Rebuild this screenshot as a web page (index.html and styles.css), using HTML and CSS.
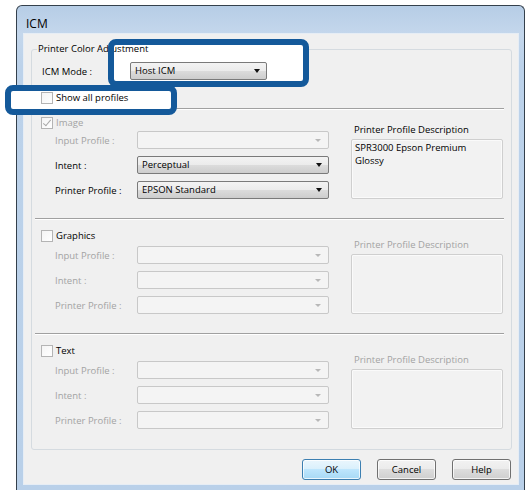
FILE: index.html
```html
<!DOCTYPE html>
<html lang="en">
<head>
  <meta charset="UTF-8">
  <meta name="viewport" content="width=device-width, initial-scale=1.0">
  <title>ICM</title>
  <link rel="stylesheet" href="styles.css">
</head>
<body>
  <div class="window">
    <div class="titlebar">ICM</div>
    <div class="client">
      <fieldset class="group">
        <legend class="raised">Printer Color Adjustment</legend>

        <div class="mode-row raised">
          <span class="mode-label">ICM Mode :</span>
          <span class="combo mode-combo">Host ICM</span>
        </div>

        <label class="check-row show-row raised">
          <span class="check"></span>Show all profiles
        </label>

        <div class="separator"></div>

        <div class="section section-first">
          <div class="section-left">
            <label class="check-row off"><span class="check checked"></span>Image</label>
            <div class="field off"><span class="field-label">Input Profile :</span><span class="combo disabled"></span></div>
            <div class="field"><span class="field-label">Intent :</span><span class="combo">Perceptual</span></div>
            <div class="field"><span class="field-label">Printer Profile :</span><span class="combo">EPSON Standard</span></div>
          </div>
          <div class="section-right">
            <div class="desc-label">Printer Profile Description</div>
            <div class="desc-box">SPR3000 Epson Premium<br>Glossy</div>
          </div>
        </div>

        <div class="separator"></div>

        <div class="section">
          <div class="section-left">
            <label class="check-row"><span class="check"></span>Graphics</label>
            <div class="field off"><span class="field-label">Input Profile :</span><span class="combo disabled"></span></div>
            <div class="field off"><span class="field-label">Intent :</span><span class="combo disabled"></span></div>
            <div class="field off"><span class="field-label">Printer Profile :</span><span class="combo disabled"></span></div>
          </div>
          <div class="section-right off">
            <div class="desc-label">Printer Profile Description</div>
            <div class="desc-box"></div>
          </div>
        </div>

        <div class="separator"></div>

        <div class="section section-last">
          <div class="section-left">
            <label class="check-row"><span class="check"></span>Text</label>
            <div class="field off"><span class="field-label">Input Profile :</span><span class="combo disabled"></span></div>
            <div class="field off"><span class="field-label">Intent :</span><span class="combo disabled"></span></div>
            <div class="field off"><span class="field-label">Printer Profile :</span><span class="combo disabled"></span></div>
          </div>
          <div class="section-right off">
            <div class="desc-label">Printer Profile Description</div>
            <div class="desc-box"></div>
          </div>
        </div>
      </fieldset>

      <div class="buttons">
        <button class="btn btn-default">OK</button>
        <button class="btn">Cancel</button>
        <button class="btn">Help</button>
      </div>
    </div>
  </div>

  <!-- highlight frames drawn over the dialog -->
  <div class="callout callout-mode"></div>
  <div class="callout callout-profiles"></div>
</body>
</html>
```

FILE: styles.css
```css
body {
  margin: 0;
  width: 529px;
  height: 492px;
  position: relative;
  overflow: hidden;
  background: #fff;
  font-family: "Open Sans", "Noto Sans", sans-serif;
  font-size: 9.5px;
  color: #000;
}

.window {
  margin: 5px 0 0 16px;
  width: 509px;
  height: 485px;
  box-sizing: border-box;
  border: 1px solid #34404c;
  border-bottom: 0;
  border-radius: 6px 6px 0 0;
  background: linear-gradient(#b6cde6, #c4d7ec 28px, #bcd2ea 60px, #b9d0e9);
  display: flex;
  flex-direction: column;
}

.titlebar {
  height: 27px;
  box-sizing: border-box;
  padding: 11px 0 0 9px;
  font-size: 12px;
  line-height: 14px;
}

.client {
  flex: 1;
  margin: 0 5px 5px 6px;
  background: #f0f0f0;
  border: 1px solid #e6edf5;
}

/* group box */
.group {
  margin: 9px 0 0 7px;
  padding: 0;
  width: 481px;
  box-sizing: border-box;
  min-inline-size: 0;
  border: 1px solid #d5dbe0;
  border-radius: 3px;
}

.group legend {
  margin-left: 5px;
  padding: 0 1px;
  line-height: 12px;
}

.raised {
  position: relative;
  z-index: 2;
}

.mode-row {
  display: flex;
  align-items: center;
  margin: 7px 0 0 10px;
  height: 18px;
}

.mode-label {
  width: 88px;
}

.mode-combo {
  width: 137px;
}

.check-row {
  display: flex;
  align-items: center;
  height: 12px;
  line-height: 12px;
}

.show-row {
  margin: 12px 0 4px 9px;
}

.check {
  width: 12px;
  height: 12px;
  box-sizing: border-box;
  margin-right: 3px;
  border: 1px solid #b4b4b4;
  background: linear-gradient(135deg, #f4f4f4, #fff);
  position: relative;
}

.checked::after {
  content: "";
  position: absolute;
  left: 3px;
  top: 0;
  width: 3px;
  height: 7px;
  border: solid #a8a8a8;
  border-width: 0 1.5px 1.5px 0;
  transform: rotate(40deg);
}

.separator {
  margin: 0 7px 0 3px;
  border-top: 1px solid #a0a0a0;
  border-bottom: 1px solid #fff;
}

.section {
  display: flex;
  padding: 10px 0 19px 9px;
}

.section-first {
  padding-top: 7px;
}

.section-last {
  padding-bottom: 20px;
}

.section-left {
  display: flex;
  flex-direction: column;
  gap: 7px;
  width: 288px;
}

.section-left .check-row {
  margin-bottom: -3px;
}

.section-first .check-row {
  margin-bottom: -5px;
}

.field {
  display: flex;
  align-items: center;
  padding-left: 14px;
  height: 18px;
}

.field-label {
  width: 82px;
}

.field .combo {
  width: 192px;
}

.off,
.off .desc-label {
  color: #a3a3a3;
}

.combo {
  height: 18px;
  box-sizing: border-box;
  padding-left: 4px;
  line-height: 16px;
  border: 1px solid #7a7a7a;
  border-radius: 2px;
  background: linear-gradient(#f3f3f3, #ebebeb 50%, #dcdcdc 50%, #cdcdcd);
  position: relative;
}

.combo::after {
  content: "";
  position: absolute;
  right: 6px;
  top: 6px;
  border-style: solid;
  border-width: 4px 3.5px 0;
  border-color: #111 transparent transparent;
}

.combo.disabled {
  border-color: #c8c8c8;
  background: #f4f4f4;
}

.combo.disabled::after {
  right: 7px;
  top: 7px;
  border-width: 3px 3px 0;
  border-color: #b8b8b8 transparent transparent;
}

.section-right {
  width: 152px;
  margin-left: 22px;
  display: flex;
  flex-direction: column;
  justify-content: flex-end;
}

.desc-label {
  line-height: 12px;
  padding-left: 3px;
  margin-bottom: 3px;
}

.desc-box {
  height: 60px;
  box-sizing: border-box;
  padding: 2px 3px;
  line-height: 12.5px;
  border: 1px solid #cfcfcf;
  border-radius: 2px;
  background: #f2f2f2;
  box-shadow: inset 0 0 0 1px #fafafa;
}

/* dialog buttons */
.buttons {
  display: flex;
  justify-content: flex-end;
  gap: 16px;
  margin: 9px 7px 0 0;
}

.btn {
  width: 59px;
  height: 21px;
  padding: 0;
  font: inherit;
  color: #000;
  border: 1px solid #707070;
  border-radius: 3px;
  background: linear-gradient(#f2f2f2, #ebebeb 50%, #dddddd 50%, #cfcfcf);
  box-shadow: inset 0 0 0 1px rgba(255, 255, 255, 0.75);
}

.btn-default {
  border-color: #3c7fb1;
  background: linear-gradient(#eaf6fd, #d9f0fc 50%, #bee6fd 50%, #a7d9f5);
}

/* highlight frames */
.callout {
  position: absolute;
}

.callout::before {
  content: "";
  position: absolute;
  inset: 3px;
  background: #fff;
  z-index: 1;
}

.callout::after {
  content: "";
  position: absolute;
  inset: 0;
  border: 6px solid #14599a;
  border-radius: 8px;
  z-index: 3;
}

.callout-mode {
  left: 108px;
  top: 39px;
  width: 201px;
  height: 48px;
}

.callout-profiles {
  left: 5px;
  top: 85px;
  width: 172px;
  height: 30px;
}
```
